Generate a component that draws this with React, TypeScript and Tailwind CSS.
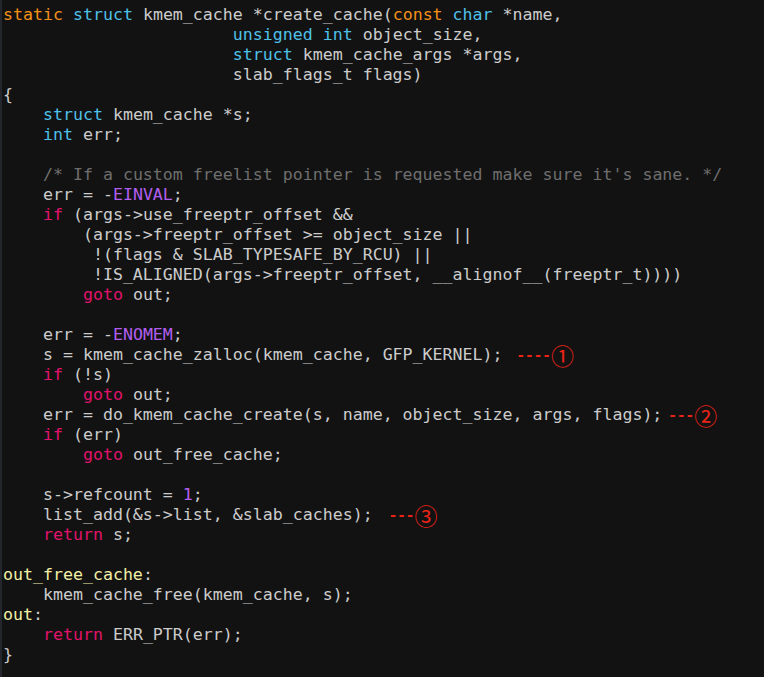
import React from 'react';

type Tok = [string, string?];

// colour classes for the syntax kinds
const c: Record<string, string> = {
  k: 'text-[#f39019]',
  t: 'text-[#4fc0e8]',
  f: 'text-[#e0126c]',
  n: 'text-[#b25ff0]',
  l: 'text-[#f2f0a6]',
  m: 'text-[#6e6e6e]',
};

const lines: { toks: Tok[]; note?: { dashes: string; mark: string; gap: string } }[] = [
  { toks: [['static', 'k'], [' '], ['struct', 't'], [' kmem_cache *create_cache('], ['const', 'k'], [' '], ['char', 't'], [' *name,']] },
  { toks: [['                       '], ['unsigned', 't'], [' '], ['int', 't'], [' object_size,']] },
  { toks: [['                       '], ['struct', 't'], [' kmem_cache_args *args,']] },
  { toks: [['                       slab_flags_t flags)']] },
  { toks: [['{']] },
  { toks: [['    '], ['struct', 't'], [' kmem_cache *s;']] },
  { toks: [['    '], ['int', 't'], [' err;']] },
  { toks: [] },
  { toks: [['    '], ["/* If a custom freelist pointer is requested make sure it's sane. */", 'm']] },
  { toks: [['    err = -'], ['EINVAL', 'n'], [';']] },
  { toks: [['    '], ['if', 'f'], [' (args->use_freeptr_offset &&']] },
  { toks: [['        (args->freeptr_offset >= object_size ||']] },
  { toks: [['         !(flags & SLAB_TYPESAFE_BY_RCU) ||']] },
  { toks: [['         !IS_ALIGNED(args->freeptr_offset, __alignof__(freeptr_t))))']] },
  { toks: [['        '], ['goto', 'f'], [' out;']] },
  { toks: [] },
  { toks: [['    err = -'], ['ENOMEM', 'n'], [';']] },
  { toks: [['    s = kmem_cache_zalloc(kmem_cache, GFP_KERNEL);']], note: { dashes: '----', mark: '①', gap: 'ml-[14px]' } },
  { toks: [['    '], ['if', 'f'], [' (!s)']] },
  { toks: [['        '], ['goto', 'f'], [' out;']] },
  { toks: [['    err = do_kmem_cache_create(s, name, object_size, args, flags);']], note: { dashes: '---', mark: '②', gap: 'ml-[6px]' } },
  { toks: [['    '], ['if', 'f'], [' (err)']] },
  { toks: [['        '], ['goto', 'f'], [' out_free_cache;']] },
  { toks: [] },
  { toks: [['    s->refcount = '], ['1', 'n'], [';']] },
  { toks: [['    list_add(&s->list, &slab_caches);']], note: { dashes: '---', mark: '③', gap: 'ml-[16px]' } },
  { toks: [['    '], ['return', 'f'], [' s;']] },
  { toks: [] },
  { toks: [['out_free_cache', 'l'], [':']] },
  { toks: [['    kmem_cache_free(kmem_cache, s);']] },
  { toks: [['out', 'l'], [':']] },
  { toks: [['    '], ['return', 'f'], [' ERR_PTR(err);']] },
  { toks: [['}']] },
];

const App = () => (
  <main className="h-[677px] w-full bg-[#121212] border-l-2 border-[#23272d] pt-[5px] pl-[1px] overflow-hidden">
    <div className="font-['DejaVu_Sans_Mono','Liberation_Mono',monospace] text-[16.6px] leading-[20px] text-[#cccccc]">
      {lines.map((line, i) => (
        <div key={i} className="h-[20px] flex items-center whitespace-pre">
          <span>
            {line.toks.map(([txt, kind], j) => (
              <span key={j} className={kind ? c[kind] : undefined}>{txt}</span>
            ))}
          </span>
          {line.note && (
            <span className={`flex items-center text-[#ec2418] ${line.note.gap}`}>
              <span className="font-['DejaVu_Sans_Mono',monospace] text-[14.3px] font-bold">{line.note.dashes}</span>
              <span className="font-['Noto_Sans_CJK_SC',sans-serif] text-[23px] leading-[20px]">{line.note.mark}</span>
            </span>
          )}
        </div>
      ))}
    </div>
  </main>
);

export default App;
